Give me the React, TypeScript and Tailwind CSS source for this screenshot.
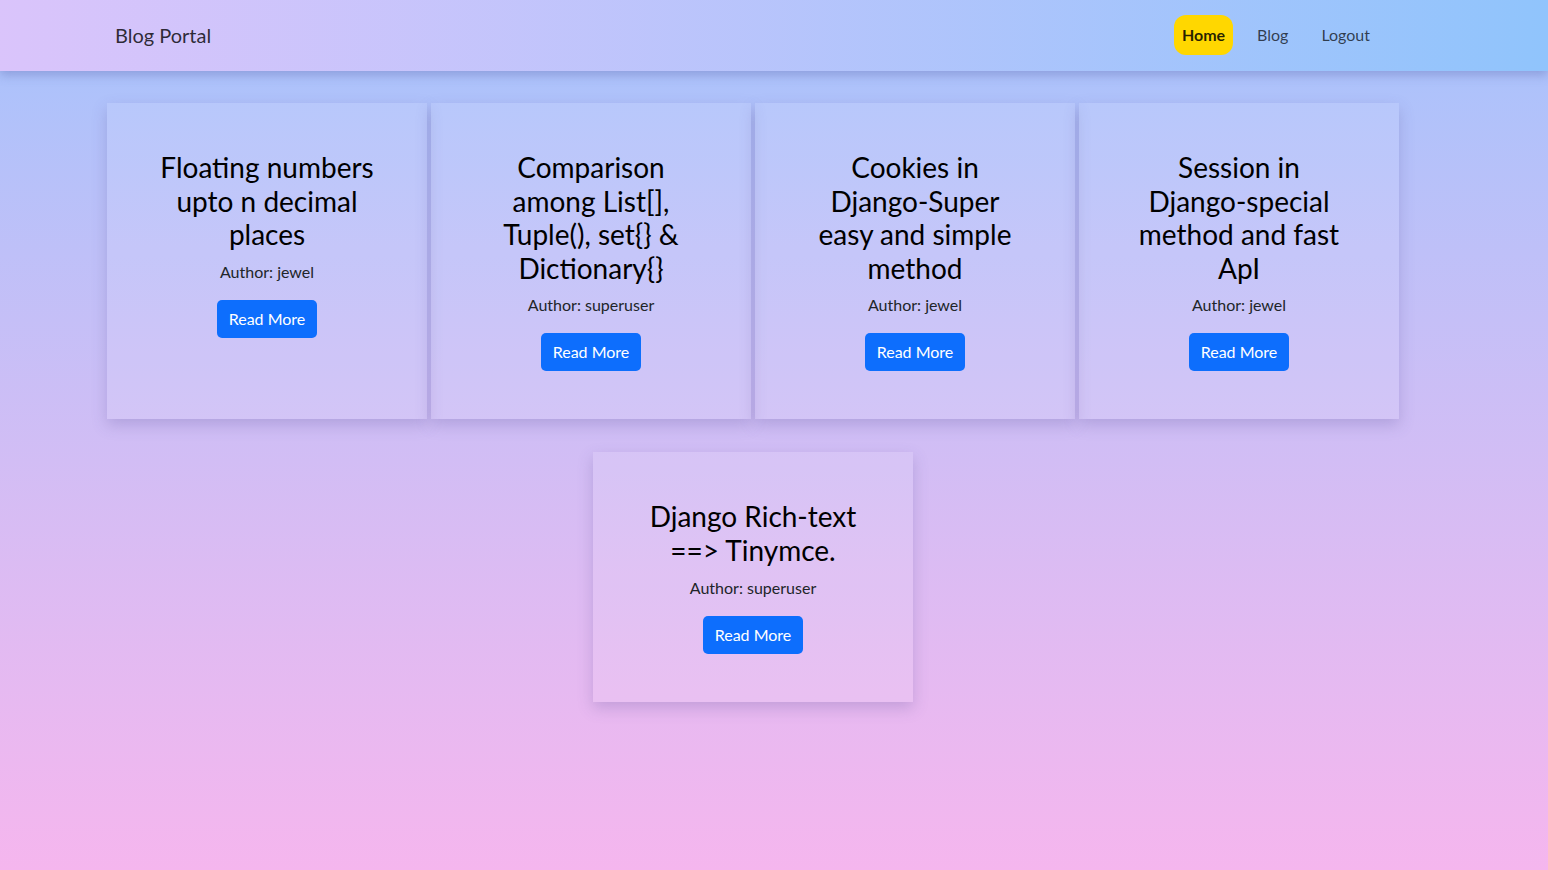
import React from 'react';

const posts = [
  { title: 'Floating numbers upto n decimal places', author: 'jewel' },
  { title: 'Comparison among List[], Tuple(), set{} & Dictionary{}', author: 'superuser' },
  { title: 'Cookies in Django-Super easy and simple method', author: 'jewel' },
  { title: 'Session in Django-special method and fast ApI', author: 'jewel' },
  { title: 'Django Rich-text ==> Tinymce.', author: 'superuser' },
];

export default function App() {
  return (
    <div
      className="min-h-[870px] bg-gradient-to-b from-[#a5c3fc] to-[#f5b6ee] text-[#212529]"
      style={{ fontFamily: 'Lato, "Open Sans", sans-serif' }}
    >
      {/* Navbar */}
      <nav className="h-[71px] bg-gradient-to-r from-[#dac4fb] to-[#90c4fc] shadow-[0_4px_10px_rgba(80,90,160,0.35)] flex items-center">
        <div className="w-full pl-[115px] pr-[178px] pb-0.5 flex items-center justify-between">
          <a className="text-[20px] text-black/80">Blog Portal</a>
          <div className="flex items-center text-[16px]">
            <a className="h-10 px-2 flex items-center rounded-xl bg-[#ffd700] font-bold text-black/85">Home</a>
            <a className="ml-6 text-black/70">Blog</a>
            <a className="ml-[33px] text-black/70">Logout</a>
          </div>
        </div>
      </nav>

      {/* Posts */}
      <div className="ml-[107px] w-[1292px] pt-8 flex flex-wrap justify-center gap-x-1 gap-y-[33px]">
        {posts.map((p) => (
          <div
            key={p.title}
            className="w-[320px] p-12 bg-white/10 shadow-[0_6px_14px_rgba(90,80,150,0.25)] flex flex-col items-center text-center"
          >
            <h3 className="text-[28px] leading-[1.2] font-normal mb-2 text-black">{p.title}</h3>
            <p className="text-[16px] leading-6 mb-4">Author: {p.author}</p>
            <button className="h-[38px] px-3 rounded-[5px] bg-[#0d6efd] text-white text-[16px]">Read More</button>
          </div>
        ))}
      </div>
    </div>
  );
}
